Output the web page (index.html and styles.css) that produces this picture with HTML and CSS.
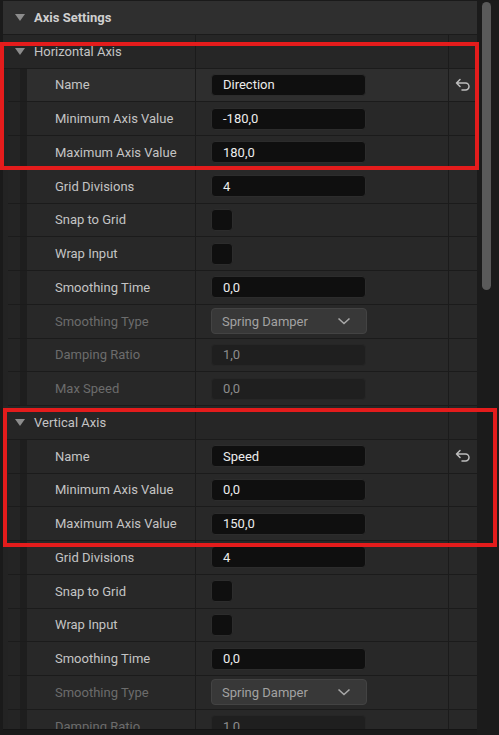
FILE: index.html
```html
<!DOCTYPE html>
<html lang="en">
<head>
    <meta charset="UTF-8">
    <meta name="viewport" content="width=device-width, initial-scale=1.0">
    <title>Axis Settings</title>
    <link rel="stylesheet" href="styles.css">
</head>
<body>
    <div class="frame">
        <div class="panel">
            <!-- Top level category -->
            <div class="header">
                <span class="arrow"></span>
                <span class="header-title">Axis Settings</span>
            </div>

            <!-- Horizontal axis -->
            <div class="category">
                <div class="cat-name"><span class="arrow"></span>Horizontal Axis</div>
                <div class="value"></div>
                <div class="reset"></div>
            </div>
            <div class="row hover">
                <div class="gutter"></div>
                <div class="name">Name</div>
                <div class="value"><div class="field">Direction</div></div>
                <div class="reset">
                    <svg width="16" height="14" viewBox="0 0 16 14"><path d="M5 1.5 L1.5 5 L5 8.5 M1.5 5 H10.5 A3.5 3.5 0 0 1 10.5 12 H7" fill="none" stroke="#bdbdbd" stroke-width="1.5" stroke-linecap="round" stroke-linejoin="round"/></svg>
                </div>
            </div>
            <div class="row">
                <div class="gutter"></div>
                <div class="name">Minimum Axis Value</div>
                <div class="value"><div class="field">-180,0</div></div>
                <div class="reset"></div>
            </div>
            <div class="row">
                <div class="gutter"></div>
                <div class="name">Maximum Axis Value</div>
                <div class="value"><div class="field">180,0</div></div>
                <div class="reset"></div>
            </div>
            <div class="row">
                <div class="gutter"></div>
                <div class="name">Grid Divisions</div>
                <div class="value"><div class="field">4</div></div>
                <div class="reset"></div>
            </div>
            <div class="row">
                <div class="gutter"></div>
                <div class="name">Snap to Grid</div>
                <div class="value"><div class="check"></div></div>
                <div class="reset"></div>
            </div>
            <div class="row">
                <div class="gutter"></div>
                <div class="name">Wrap Input</div>
                <div class="value"><div class="check"></div></div>
                <div class="reset"></div>
            </div>
            <div class="row">
                <div class="gutter"></div>
                <div class="name">Smoothing Time</div>
                <div class="value"><div class="field">0,0</div></div>
                <div class="reset"></div>
            </div>
            <div class="row disabled">
                <div class="gutter"></div>
                <div class="name">Smoothing Type</div>
                <div class="value">
                    <div class="combo">Spring Damper
                        <svg width="14" height="8" viewBox="0 0 14 8"><path d="M1.5 1.5 L7 6.5 L12.5 1.5" fill="none" stroke="#a8a8a8" stroke-width="1.6"/></svg>
                    </div>
                </div>
                <div class="reset"></div>
            </div>
            <div class="row disabled">
                <div class="gutter"></div>
                <div class="name">Damping Ratio</div>
                <div class="value"><div class="field">1,0</div></div>
                <div class="reset"></div>
            </div>
            <div class="row disabled">
                <div class="gutter"></div>
                <div class="name">Max Speed</div>
                <div class="value"><div class="field">0,0</div></div>
                <div class="reset"></div>
            </div>

            <!-- Vertical axis -->
            <div class="category">
                <div class="cat-name"><span class="arrow"></span>Vertical Axis</div>
                <div class="value"></div>
                <div class="reset"></div>
            </div>
            <div class="row">
                <div class="gutter"></div>
                <div class="name">Name</div>
                <div class="value"><div class="field">Speed</div></div>
                <div class="reset">
                    <svg width="16" height="14" viewBox="0 0 16 14"><path d="M5 1.5 L1.5 5 L5 8.5 M1.5 5 H10.5 A3.5 3.5 0 0 1 10.5 12 H7" fill="none" stroke="#bdbdbd" stroke-width="1.5" stroke-linecap="round" stroke-linejoin="round"/></svg>
                </div>
            </div>
            <div class="row">
                <div class="gutter"></div>
                <div class="name">Minimum Axis Value</div>
                <div class="value"><div class="field">0,0</div></div>
                <div class="reset"></div>
            </div>
            <div class="row">
                <div class="gutter"></div>
                <div class="name">Maximum Axis Value</div>
                <div class="value"><div class="field">150,0</div></div>
                <div class="reset"></div>
            </div>
            <div class="row">
                <div class="gutter"></div>
                <div class="name">Grid Divisions</div>
                <div class="value"><div class="field">4</div></div>
                <div class="reset"></div>
            </div>
            <div class="row">
                <div class="gutter"></div>
                <div class="name">Snap to Grid</div>
                <div class="value"><div class="check"></div></div>
                <div class="reset"></div>
            </div>
            <div class="row">
                <div class="gutter"></div>
                <div class="name">Wrap Input</div>
                <div class="value"><div class="check"></div></div>
                <div class="reset"></div>
            </div>
            <div class="row">
                <div class="gutter"></div>
                <div class="name">Smoothing Time</div>
                <div class="value"><div class="field">0,0</div></div>
                <div class="reset"></div>
            </div>
            <div class="row disabled">
                <div class="gutter"></div>
                <div class="name">Smoothing Type</div>
                <div class="value">
                    <div class="combo">Spring Damper
                        <svg width="14" height="8" viewBox="0 0 14 8"><path d="M1.5 1.5 L7 6.5 L12.5 1.5" fill="none" stroke="#a8a8a8" stroke-width="1.6"/></svg>
                    </div>
                </div>
                <div class="reset"></div>
            </div>
            <div class="row disabled">
                <div class="gutter"></div>
                <div class="name">Damping Ratio</div>
                <div class="value"><div class="field">1,0</div></div>
                <div class="reset"></div>
            </div>
        </div>

        <div class="scrollbar">
            <div class="thumb"></div>
        </div>
    </div>

    <!-- highlight boxes -->
    <div class="mark mark-h"></div>
    <div class="mark mark-v"></div>
</body>
</html>
```

FILE: styles.css
```css
body {
    margin: 0;
    background: #1a1a1a;
    font-family: Roboto, "Liberation Sans", sans-serif;
    font-size: 13px;
    color: #c4c4c4;
    overflow: hidden;
}
.frame {
    display: flex;
    height: 735px;
    padding: 1px 0 0 3px;
    box-sizing: border-box;
}
.panel {
    width: 474px;
    height: 728px;
    overflow: hidden;
    background: #232323;
    border-bottom: 1px solid #141414;
}
.header {
    display: flex;
    align-items: center;
    height: 33.76px;
    box-sizing: border-box;
    padding-left: 12px;
    background: #2f2f2f;
    border-bottom: 1px solid #1b1b1b;
}
.header-title {
    font-weight: bold;
    color: #cfcfcf;
}
.arrow {
    width: 0;
    height: 0;
    border-left: 5.5px solid transparent;
    border-right: 5.5px solid transparent;
    border-top: 7px solid #8c8c8c;
    margin-right: 9px;
}
.category {
    display: flex;
    height: 33.76px;
    box-sizing: border-box;
    background: #262626;
    border-bottom: 1px solid #1b1b1b;
}
.cat-name {
    width: 192px;
    display: flex;
    align-items: center;
    padding-left: 12px;
    box-sizing: border-box;
}
.row {
    display: flex;
    height: 33.76px;
    box-sizing: border-box;
    margin-left: 5px;
    background: #282828;
    border-bottom: 1px solid #1b1b1b;
}
.row.hover {
    background: #2e2e2e;
}
.gutter {
    width: 19px;
    background: linear-gradient(to right, #242424 12px, #1e1e1e 12px);
}
.name {
    width: 168px;
    display: flex;
    align-items: center;
    padding-left: 28px;
    box-sizing: border-box;
}
.disabled .name {
    color: #6c6c6c;
}
.value {
    width: 253px;
    display: flex;
    align-items: center;
    padding-left: 15px;
    box-sizing: border-box;
    border-left: 1px solid #1b1b1b;
}
.reset {
    flex: 1;
    display: flex;
    align-items: center;
    justify-content: center;
    border-left: 1px solid #1b1b1b;
}
.field {
    width: 155px;
    height: 22px;
    box-sizing: border-box;
    padding-left: 11px;
    display: flex;
    align-items: center;
    background: #0f0f0f;
    border: 1px solid #2c2c2c;
    border-radius: 4px;
    color: #ececec;
}
.disabled .field {
    background: #1f1f1f;
    border-color: #262626;
    color: #8c8c8c;
}
.check {
    width: 22px;
    height: 22px;
    box-sizing: border-box;
    background: #0f0f0f;
    border: 1px solid #2c2c2c;
    border-radius: 4px;
}
.combo {
    width: 156px;
    height: 26px;
    box-sizing: border-box;
    display: flex;
    align-items: center;
    justify-content: space-between;
    padding: 0 15px 0 10px;
    background: #383838;
    border: 1px solid #434343;
    border-radius: 4px;
    color: #a2a2a2;
}
.scrollbar {
    width: 22px;
    background: #1b1b1b;
    padding: 1px 0 0 5px;
    box-sizing: border-box;
}
.thumb {
    width: 9px;
    height: 288px;
    background: #5a5a5a;
    border-radius: 5px;
}
.mark {
    position: absolute;
    border: 4px solid #e41c1c;
    box-sizing: border-box;
}
.mark-h {
    left: 0;
    top: 42px;
    width: 479px;
    height: 128px;
}
.mark-v {
    left: 3px;
    top: 408px;
    width: 494px;
    height: 139px;
}
```
